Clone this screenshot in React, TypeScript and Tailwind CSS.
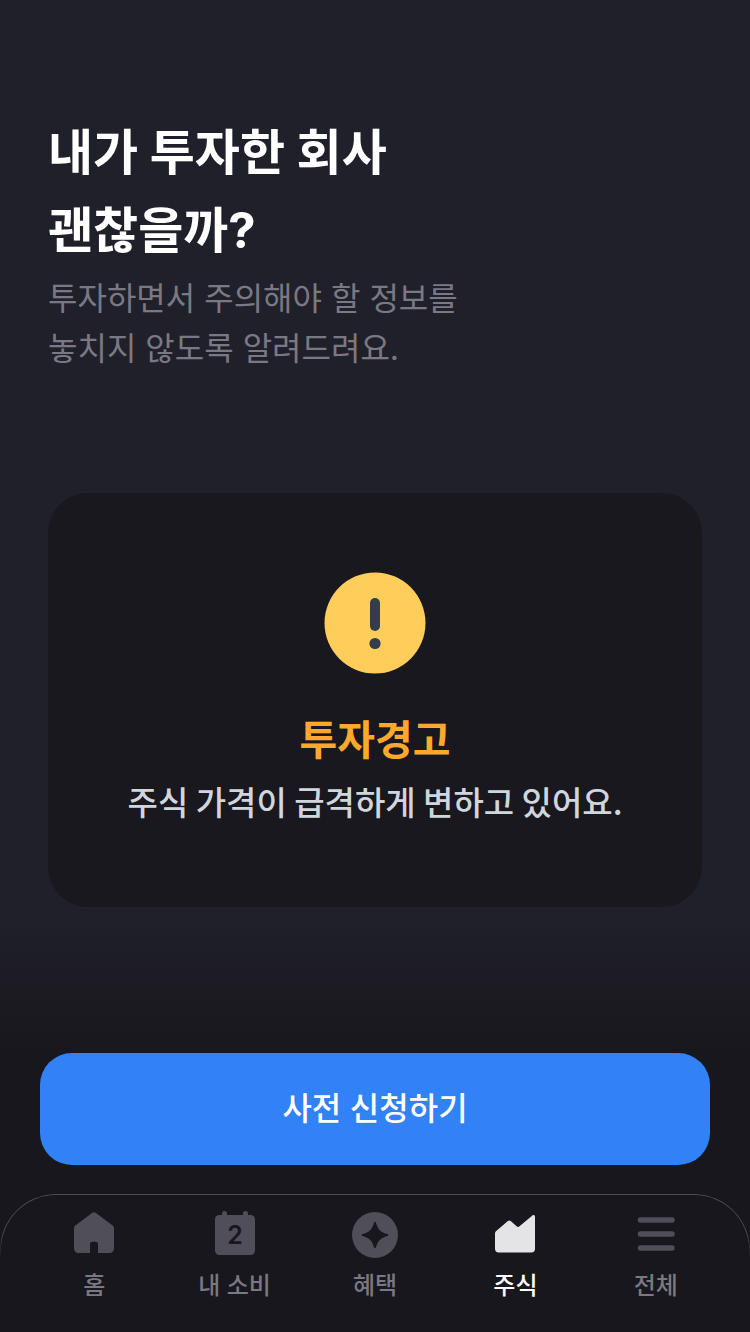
import React from 'react';
import clsx from 'clsx';

const HomeIcon = () => (
  <svg viewBox="0 0 48 48" className="size-12" fill="currentColor" aria-hidden="true">
    <path d="M21.7 3.2 5.3 15.4A3.2 3.2 0 0 0 4 18v20.6A4.4 4.4 0 0 0 8.4 43H20V34.4a2.6 2.6 0 0 1 2.6-2.6h2.8a2.6 2.6 0 0 1 2.6 2.6V43h11.6a4.4 4.4 0 0 0 4.4-4.4V18a3.2 3.2 0 0 0-1.3-2.6L26.3 3.2a3.9 3.9 0 0 0-4.6 0Z" />
  </svg>
);

const CalendarIcon = () => (
  <svg viewBox="0 0 48 48" className="size-12" aria-hidden="true">
    <rect x="4" y="5" width="40" height="40" rx="4.5" fill="currentColor" />
    <rect x="11" y="1" width="5" height="8" rx="2.5" fill="currentColor" />
    <rect x="32" y="1" width="5" height="8" rx="2.5" fill="currentColor" />
    <text x="24" y="34" textAnchor="middle" fontFamily="Inter, sans-serif" fontSize="25" fontWeight="600" fill="#18171d">
      2
    </text>
  </svg>
);

const BenefitIcon = () => (
  <svg viewBox="0 0 48 48" className="size-12" aria-hidden="true">
    <circle cx="24" cy="25" r="23" fill="currentColor" />
    <path
      d="M23.1 12.4c.3-.9 1.5-.9 1.8 0 2.1 7.3 4.4 9.6 11.7 11.700.9.3.9 1.500 0 1.800-7.300 2.100-9.600 4.400-11.700 11.700-.3.9-1.500.9-1.800 0-2.100-7.300-4.400-9.600-11.700-11.700-.9-.3-.9-1.500 0-1.800 7.300-2.100 9.600-4.400 11.700-11.700Z"
      fill="#18171d"
    />
  </svg>
);

const StockIcon = () => (
  <svg viewBox="0 0 48 48" className="size-12" fill="currentColor" aria-hidden="true">
    <path d="M4 23.4c0-1 .4-1.9 1.2-2.5L16.9 11.1a2.2 2.2 0 0 1 2.8 0l6.2 5.4a1.8 1.8 0 0 0 2.3 0L41.4 5.4c1-.9 2.6-.2 2.6 1.2V38.8a3.7 3.7 0 0 1-3.7 3.7H7.7A3.7 3.7 0 0 1 4 38.8Z" />
  </svg>
);

const MenuIcon = () => (
  <svg viewBox="0 0 48 48" className="size-12" fill="none" stroke="currentColor" strokeWidth="5.5" strokeLinecap="round" aria-hidden="true">
    <path d="M8.5 10h31.5M8.5 24h31.5M8.5 38h31.5" />
  </svg>
);

const WarningIcon = () => (
  <svg viewBox="0 0 102 102" className="size-[102px]" aria-hidden="true">
    <circle cx="51" cy="51" r="50.5" fill="#ffcd59" />
    <rect x="46" y="26" width="10" height="33" rx="5" fill="#333d4b" />
    <circle cx="51" cy="71.5" r="5.6" fill="#333d4b" />
  </svg>
);

const TABS = [
  { label: '홈', Icon: HomeIcon },
  { label: '내 소비', Icon: CalendarIcon },
  { label: '혜택', Icon: BenefitIcon },
  { label: '주식', Icon: StockIcon, active: true },
  { label: '전체', Icon: MenuIcon },
];

const WarningCard = () => (
  <section className="mx-12 flex flex-col items-center rounded-[40px] bg-[#19181e] px-6 pt-[79px] pb-[81px] text-center">
    <WarningIcon />
    <h2 className="mt-9 text-[41px] leading-[60px] font-bold text-[#fea82d]">투자경고</h2>
    <p className="mt-1.5 font-['Noto_Sans_CJK_KR',sans-serif] text-[33px] leading-[50px] font-medium text-[#d1d6de]">
      주식 가격이 급격하게 변하고 있어요.
    </p>
  </section>
);

const TabBar = () => (
  <nav className="relative flex px-6 pt-4 pb-[30px]">
    {/* outline that fades out down both sides */}
    <span
      aria-hidden="true"
      className="pointer-events-none absolute inset-x-0 top-0 h-16 rounded-t-[56px] border-x border-t border-[#4f4f57] [mask-image:linear-gradient(black_60%,transparent)]"
    />
    {TABS.map(({ label, Icon, active }) => (
      <a
        key={label}
        href="#"
        aria-current={active ? 'page' : undefined}
        className="flex flex-1 flex-col items-center gap-3"
      >
        <span className={clsx(active ? 'text-[#e4e4e6]' : 'text-[#4f4e59]')}>
          <Icon />
        </span>
        <span className={clsx('text-2xl font-medium', active ? 'text-white' : 'text-[#7a7983]')}>
          {label}
        </span>
      </a>
    ))}
  </nav>
);

const App = () => {
  return (
    <div className="flex min-h-screen flex-col bg-[#20202a] font-['Inter','Noto_Sans_CJK_KR',sans-serif]">
      <main>
        <header className="px-12 pt-[114px] pb-[119px]">
          <h1 className="text-[49px] leading-[78px] font-bold text-white">
            내가 투자한 회사
            <br />
            괜찮을까?
          </h1>
          <p className="mt-1 text-[32px] leading-[50px] text-[#7a7983]">
            투자하면서 주의해야 할 정보를
            <br />
            놓치지 않도록 알려드려요.
          </p>
        </header>
        <WarningCard />
      </main>
      <footer className="mt-auto bg-linear-to-b from-[#20202a] from-[10px] to-[#18171d] to-[146px] pt-[146px]">
        <div className="px-10 pb-[29px]">
          <button
            type="button"
            className="h-28 w-full rounded-[32px] bg-[#3182f6] text-[32px] font-medium text-white"
          >
            사전 신청하기
          </button>
        </div>
        <TabBar />
      </footer>
    </div>
  );
};

export default App;
